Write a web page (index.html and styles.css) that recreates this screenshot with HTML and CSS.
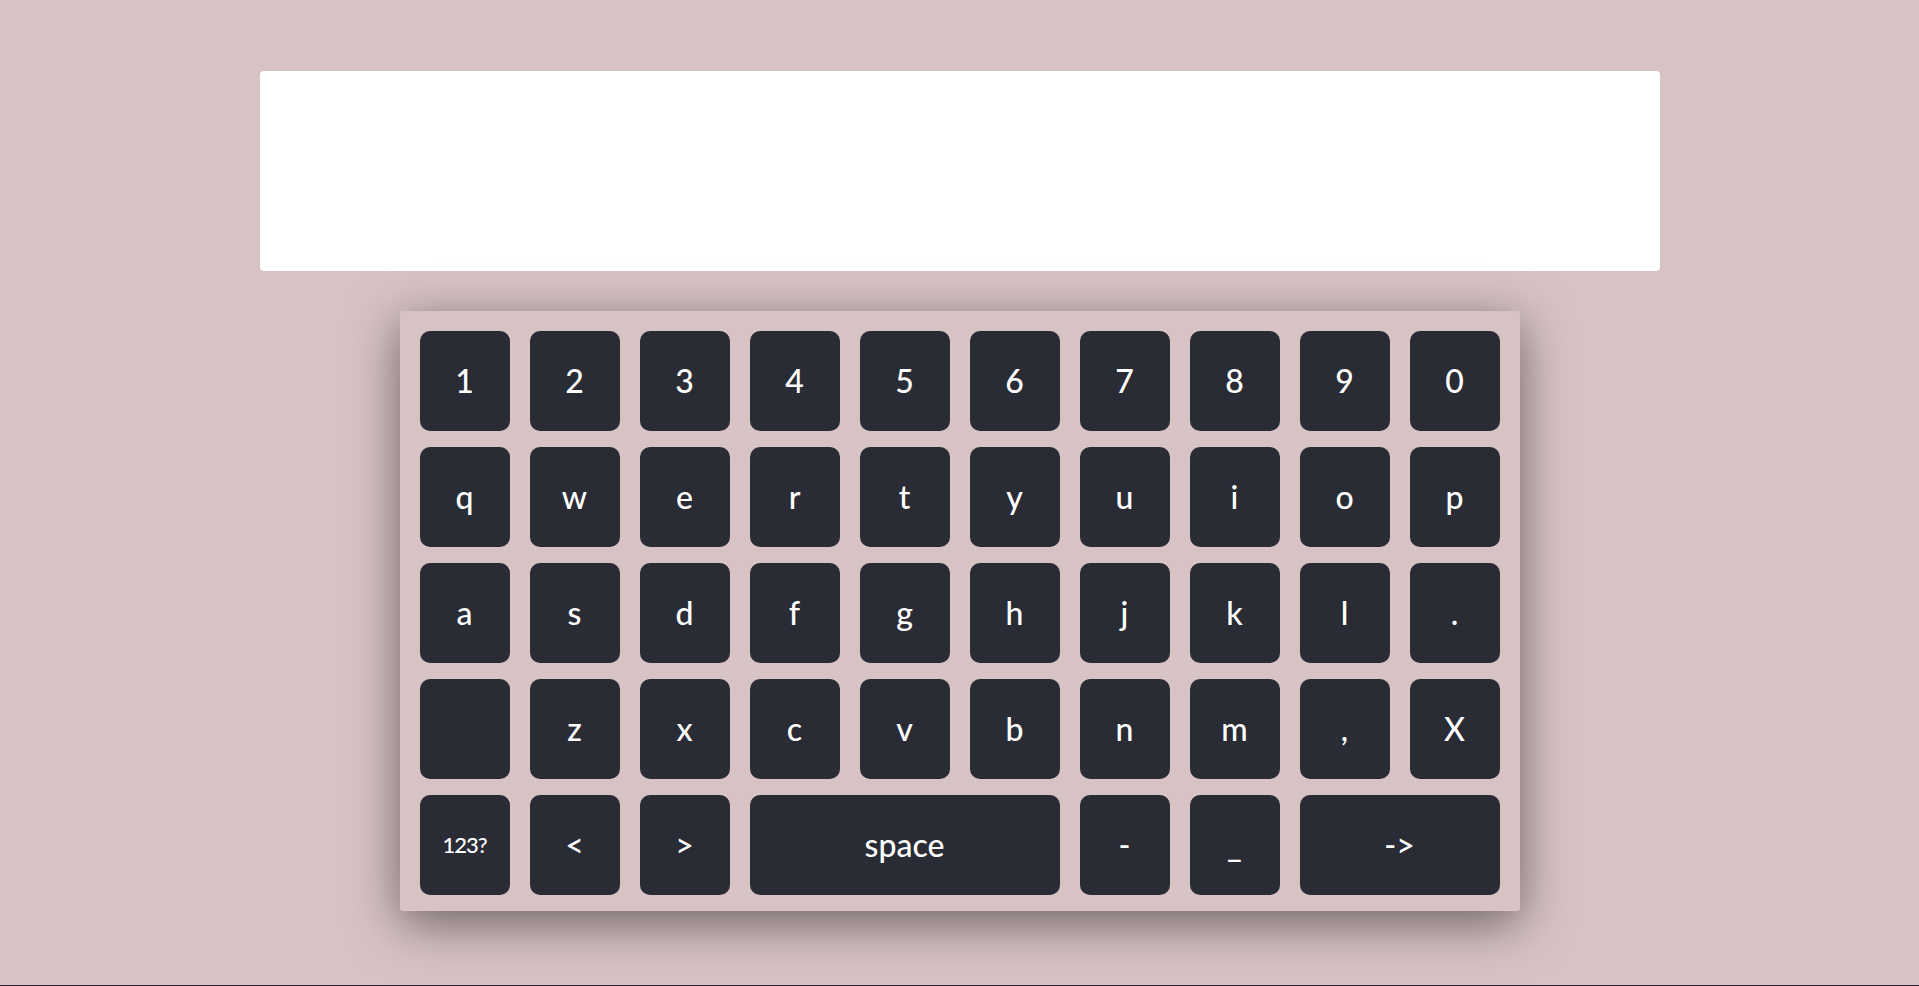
FILE: index.html
```html
<!DOCTYPE html>
<html lang="en">
<head>
<meta charset="utf-8">
<title>Keyboard</title>
<link rel="stylesheet" href="styles.css">
</head>
<body>
<main class="page">
  <div class="display"></div>
  <div class="keyboard">
    <button class="key">1</button>
    <button class="key">2</button>
    <button class="key">3</button>
    <button class="key">4</button>
    <button class="key">5</button>
    <button class="key">6</button>
    <button class="key">7</button>
    <button class="key">8</button>
    <button class="key">9</button>
    <button class="key">0</button>

    <button class="key">q</button>
    <button class="key">w</button>
    <button class="key">e</button>
    <button class="key">r</button>
    <button class="key">t</button>
    <button class="key">y</button>
    <button class="key">u</button>
    <button class="key">i</button>
    <button class="key">o</button>
    <button class="key">p</button>

    <button class="key">a</button>
    <button class="key">s</button>
    <button class="key">d</button>
    <button class="key">f</button>
    <button class="key">g</button>
    <button class="key">h</button>
    <button class="key">j</button>
    <button class="key">k</button>
    <button class="key">l</button>
    <button class="key">.</button>

    <button class="key"></button>
    <button class="key">z</button>
    <button class="key">x</button>
    <button class="key">c</button>
    <button class="key">v</button>
    <button class="key">b</button>
    <button class="key">n</button>
    <button class="key">m</button>
    <button class="key">,</button>
    <button class="key">X</button>

    <button class="key key-small">123?</button>
    <button class="key">&lt;</button>
    <button class="key">&gt;</button>
    <button class="key key-space">space</button>
    <button class="key">-</button>
    <button class="key">_</button>
    <button class="key key-wide">-&gt;</button>
  </div>
</main>
</body>
</html>
```

FILE: styles.css
```css
html, body {
  margin: 0;
  padding: 0;
}

body {
  background: #d8c3c4;
  min-height: 985px;
  border-bottom: 1px solid #2a2a2e;
  font-family: "Lato", "Noto Sans", sans-serif;
  overflow: hidden;
}

.page {
  display: flex;
  flex-direction: column;
  align-items: center;
  padding-top: 71px;
  gap: 40px;
}

.display {
  width: 1400px;
  height: 200px;
  background: #ffffff;
  border-radius: 4px;
}

.keyboard {
  width: 1120px;
  box-sizing: border-box;
  padding: 20px 20px 16px 20px;
  display: grid;
  grid-template-columns: repeat(10, 90px);
  grid-auto-rows: 100px;
  column-gap: 20px;
  row-gap: 16px;
  background: #d8c3c4;
  border-radius: 3px;
  box-shadow: 0 12px 50px rgba(0, 0, 0, 0.5);
}

.key {
  border: none;
  margin: 0;
  padding: 0;
  background: #292c35;
  color: #ffffff;
  border-radius: 10px;
  font-family: inherit;
  font-size: 32px;
  font-weight: 500;
  display: flex;
  align-items: center;
  justify-content: center;
  line-height: 1;
}

.key-small {
  font-size: 22px;
  letter-spacing: -1px;
}

.key-space {
  grid-column: span 3;
}

.key-wide {
  grid-column: span 2;
}
```
